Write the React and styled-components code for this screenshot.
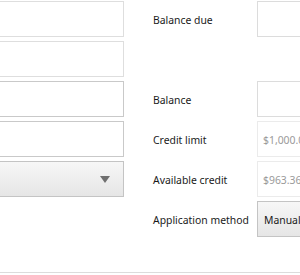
import React from "react";
import styled, { createGlobalStyle } from "styled-components";

const Global = createGlobalStyle`
  html, body { margin: 0; padding: 0; background: #fff; overflow: hidden; }
  body { font-family: "Segoe UI", "Noto Sans", "Open Sans", sans-serif; }
`;

const Page = styled.div`
  width: 300px;
  height: 275px;
  overflow: hidden;
  position: relative;
`;

const Form = styled.div`
  display: grid;
  grid-template-columns: 144px 128px 1fr;
  grid-auto-rows: 36px;
  row-gap: 4px;
  margin-left: -20px;
  padding-top: 1px;
  width: 380px;
`;

const LeftBox = styled.div`
  grid-column: 1;
  box-sizing: border-box;
  border: 1px solid ${(p) => (p.$strong ? "#c9c9c9" : "#dedede")};
  background: #fff;
`;

const Select = styled.div`
  grid-column: 1;
  box-sizing: border-box;
  border: 1px solid #c4c4c4;
  background: linear-gradient(#f7f7f7, #e6e6e6);
  display: flex;
  align-items: center;
  justify-content: flex-end;
  padding-right: 13px;
`;

const Arrow = styled.span`
  width: 0;
  height: 0;
  border-left: 5px solid transparent;
  border-right: 5px solid transparent;
  border-top: 7px solid #6f6f6f;
`;

const Label = styled.div`
  grid-column: 2;
  padding-left: 29px;
  padding-top: 2px;
  display: flex;
  align-items: center;
  font-size: 10.4px;
  color: #1a1a1a;
  white-space: nowrap;
`;

const Field = styled.div`
  grid-column: 3;
  margin-left: 5px;
  box-sizing: border-box;
  border: 1px solid ${(p) => (p.$disabled ? "#ebebeb" : "#dcdcdc")};
  background: #fff;
  display: flex;
  align-items: center;
  padding-left: 5px;
  padding-top: 2px;
  font-size: 10.4px;
  color: #9a9a9a;
  white-space: nowrap;
`;

const Button = styled.div`
  grid-column: 3;
  margin-left: 5px;
  box-sizing: border-box;
  border: 1px solid #c4c4c4;
  background: linear-gradient(#f7f7f7, #e6e6e6);
  display: flex;
  align-items: center;
  padding-left: 6px;
  padding-top: 2px;
  font-size: 10.4px;
  color: #1a1a1a;
  white-space: nowrap;
`;

const Spacer = styled.div`
  grid-column: ${(p) => p.$col};
`;

const Footer = styled.div`
  position: absolute;
  left: 0;
  right: 0;
  top: 272px;
  height: 1px;
  background: #dcdcdc;
`;

export default function App() {
  return (
    <Page>
      <Global />
      <Form>
        <LeftBox />
        <Label>Balance due</Label>
        <Field />

        <LeftBox />
        <Spacer $col="2 / 4" />

        <LeftBox $strong />
        <Label>Balance</Label>
        <Field />

        <LeftBox $strong />
        <Label>Credit limit</Label>
        <Field $disabled>$1,000.00</Field>

        <Select>
          <Arrow />
        </Select>
        <Label>Available credit</Label>
        <Field $disabled>$963.36</Field>

        <Spacer $col="1" />
        <Label>Application method</Label>
        <Button>Manual</Button>
      </Form>
      <Footer />
    </Page>
  );
}
